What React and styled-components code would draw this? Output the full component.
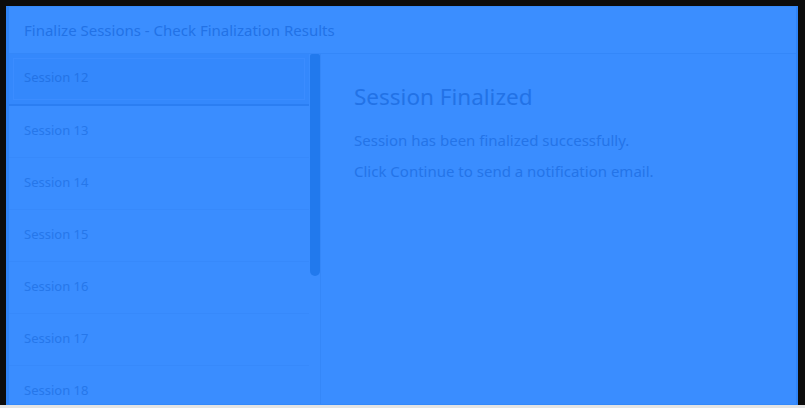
import React from 'react'
import styled, { createGlobalStyle } from 'styled-components'

const Global = createGlobalStyle`
  html, body {
    margin: 0;
    padding: 0;
    background: #0c0c0c;
    font-family: "Noto Sans", "Liberation Sans", Arial, sans-serif;
  }
`

const Page = styled.div`
  width: 805px;
  height: 408px;
  display: flex;
  flex-direction: column;
  overflow: hidden;
`

const Frame = styled.div`
  flex: 1;
  margin: 6px 7px 0 6px;
  background: #3a8dff;
  border: 1px solid #3389fb;
  border-left: 3px solid #2f84f7;
  border-right: 2px solid #2f84f7;
  box-sizing: border-box;
  display: flex;
  flex-direction: column;
  min-height: 0;
`

const Header = styled.div`
  height: 46px;
  flex: none;
  display: flex;
  align-items: center;
  padding-left: 15px;
  border-bottom: 1px solid #3487f9;
  font-size: 15px;
  color: #2272e6;
  background: #3b8eff;
`

const Body = styled.div`
  flex: 1;
  display: grid;
  grid-template-columns: 300px 12px 1fr;
  min-height: 0;
`

const List = styled.div`
  display: flex;
  flex-direction: column;
  overflow: hidden;
`

const Item = styled.div`
  height: 52px;
  flex: none;
  box-sizing: border-box;
  display: flex;
  align-items: center;
  padding: 0 0 4px 15px;
  font-size: 13px;
  color: ${p => (p.$selected ? '#2373e6' : '#2677ea')};
  background: ${p => (p.$selected ? '#3488fc' : 'transparent')};
  border-bottom: ${p => (p.$selected ? '2px solid #2b7ef2' : '1px solid #3789fb')};
  box-shadow: ${p => (p.$selected ? 'inset 0 0 0 4px #3488fc, inset 0 0 0 5px #3b8cff' : 'none')};
`

const Track = styled.div`
  border-right: 1px solid #3587f8;
`

const Thumb = styled.div`
  width: 10px;
  margin-left: 1px;
  height: 222px;
  border-radius: 2px 2px 5px 5px;
  background: #2179ed;
`

const Detail = styled.div`
  padding: 29px 33px;
  color: #2474e8;
`

const Title = styled.h2`
  margin: 0 0 19px;
  font-size: 22.5px;
  line-height: 28px;
  font-weight: 400;
  color: #2272e6;
`

const Line = styled.p`
  margin: 0 0 11px;
  font-size: 15px;
  line-height: 20px;
`

const Bottom = styled.div`
  height: 3px;
  flex: none;
  background: #e4e4e4;
`

const sessions = [12, 13, 14, 15, 16, 17, 18]

export default function App() {
  return (
    <>
      <Global />
      <Page>
        <Frame>
          <Header>Finalize Sessions - Check Finalization Results</Header>
          <Body>
            <List>
              {sessions.map(n => (
                <Item key={n} $selected={n === 12}>Session {n}</Item>
              ))}
            </List>
            <Track>
              <Thumb />
            </Track>
            <Detail>
              <Title>Session Finalized</Title>
              <Line>Session has been finalized successfully.</Line>
              <Line>Click Continue to send a notification email.</Line>
            </Detail>
          </Body>
        </Frame>
        <Bottom />
      </Page>
    </>
  )
}
